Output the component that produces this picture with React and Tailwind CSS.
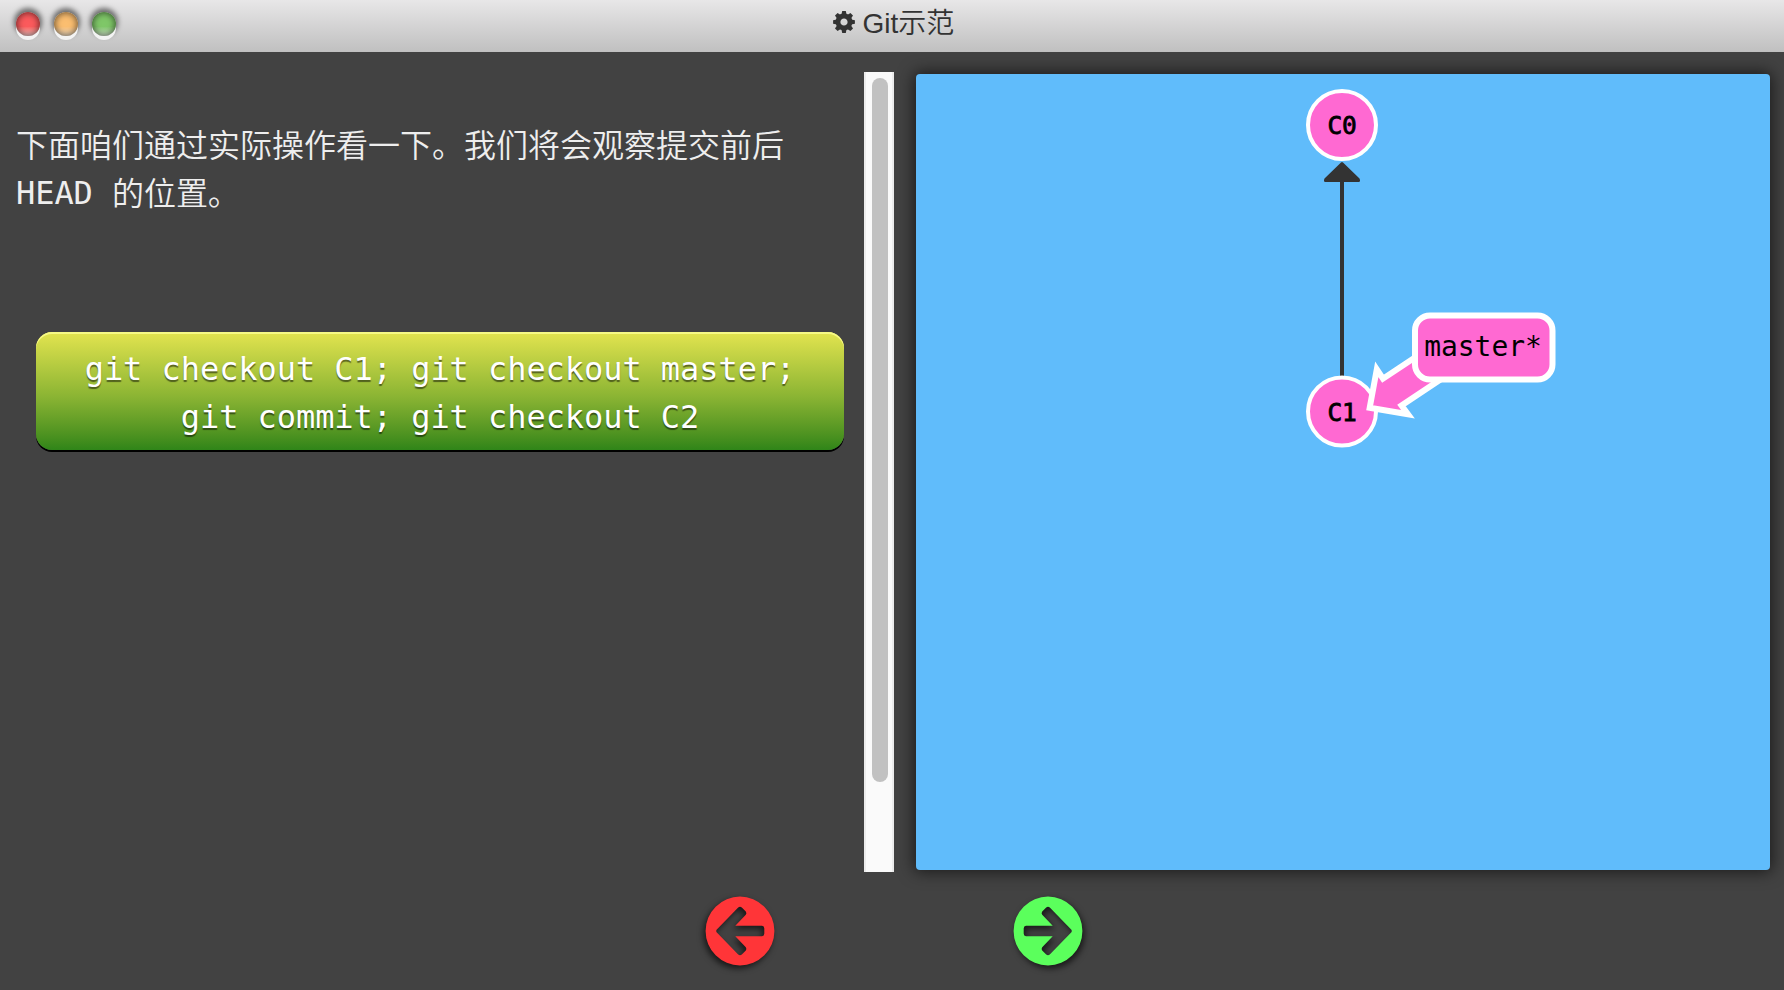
import React from "react";

const MONO = "font-['DejaVu_Sans_Mono','Noto_Sans_CJK_SC',monospace]";

function Light({ className }) {
  return (
    <span
      className={`size-6 rounded-full shadow-[0_4px_0_#f3f3f3,0_-2px_5px_2px_rgba(0,0,0,0.5),inset_0_0_6px_1px_rgba(0,0,0,0.55)] ${className}`}
    />
  );
}

function Gear() {
  return (
    <svg width="22" height="22" viewBox="-11 -11 22 22" fill="#333">
      <circle r="6" fill="none" stroke="#333" strokeWidth="4.8" />
      {[0, 45, 90, 135, 180, 225, 270, 315].map((a) => (
        <path key={a} d="M-2.6-7.2L-1.8-10.9H1.8L2.6-7.2Z" transform={`rotate(${a})`} />
      ))}
    </svg>
  );
}

function TitleBar() {
  return (
    <header className="flex h-[52px] shrink-0 bg-linear-to-b from-[#e8e7e8] to-[#c0c0c0]">
      <div className="flex w-[833px] gap-[14px] pt-3 pl-4">
        <Light className="bg-linear-to-b from-[#fb5a5c] from-60% to-[#f5c4c4]" />
        <Light className="bg-linear-to-b from-[#fbbe70] from-60% to-[#f0dcc0]" />
        <Light className="bg-linear-to-b from-[#7fc768] from-60% to-[#cfe4c8]" />
      </div>
      <div className="flex items-start gap-[7.5px] text-[28px] leading-8 text-[#333]">
        <div className="pt-[10.5px]">
          <Gear />
        </div>
        <h1 className="pt-[8px] font-['Liberation_Sans','Noto_Sans_CJK_SC',sans-serif] font-[350]">Git示范</h1>
      </div>
    </header>
  );
}

function RoundArrow({ color, flip }) {
  return (
    <svg
      width="70"
      height="70"
      viewBox="-35 -35 70 70"
      className={`overflow-visible ${flip ? "-scale-x-100" : ""} drop-shadow-[-2px_3px_3px_rgba(0,0,0,0.65)]`}
    >
      <path
        fill={color}
        fillRule="evenodd"
        d="M0-34.4A34.4 34.4 0 1 1 0 34.4A34.4 34.4 0 1 1 0-34.4ZM-23.4-1.3L-1.8-23.4Q0-25 1.8-23.4L5.8-19.6Q7-18 5.8-16.2L-4.7-5.3H22Q24.3-5 24.3-2.5V2.5Q24.3 5 22 5.3H-4.7L5.8 16.2Q7 18 5.8 19.6L1.8 23.4Q0 25-1.8 23.4L-23.4 1.3Q-24.3 0-23.4-1.3Z"
      />
    </svg>
  );
}

function CommitTree() {
  return (
    <svg width="854" height="796" viewBox="916 74 854 796" className={MONO}>
      <path d="M1342 178V380" stroke="#333" strokeWidth="4" />
      <path d="M1341 162.5Q1342 161.5 1343 162.5L1359.5 178.5Q1361 182 1358.5 182H1325.5Q1323 182 1324.5 178.5Z" fill="#333" />
      <g fill="#ff69d2" stroke="#fff" strokeWidth="4">
        <circle cx="1342" cy="125" r="34" />
        <circle cx="1342" cy="411.5" r="34" />
      </g>
      <g fontSize="24.5" textAnchor="middle" stroke="#000" strokeWidth="0.8" letterSpacing="-0.2">
        <text x="1342" y="134">C0</text>
        <text x="1342" y="421">C1</text>
      </g>
      <g fill="#ff69d2" stroke="#fff" strokeWidth="6">
        <path d="M1450 334.3L1383 378.7L1376.8 369.3L1369.7 407.7L1408 414.3L1401.5 405.5L1460 366.5Z" />
        <rect x="1415" y="315.5" width="137.5" height="64" rx="15" />
      </g>
      <text x="1483" y="356" fontSize="28" textAnchor="middle" letterSpacing="-0.06">master*</text>
    </svg>
  );
}

export default function App() {
  return (
    <div className="flex h-[990px] w-[1784px] flex-col overflow-hidden bg-[#424242]">
      <TitleBar />
      <main className="flex h-[820px] shrink-0 pt-5">
        <section className={`w-[864px] pt-[50px] text-[32px] leading-[48px] tracking-[-0.06px] text-[#eee] ${MONO}`}>
          <p className="pl-4 font-[350]">
            <span className="tracking-normal">下面咱们通过实际操作看一下。我们将会观察提交前后</span>
            <br />
            <span className="align-[1px] leading-none font-normal">HEAD </span>的位置。
          </p>
          <button className="mt-[114px] ml-9 block h-[118px] w-[808px] rounded-2xl bg-linear-to-b from-[#e3e44f] via-[#8ab433] via-55% to-[#2f8519] pt-[3px] text-center text-white shadow-[inset_0_2px_0_#f6f985,0_2px_0_#000] [text-shadow:0_2px_1px_rgba(0,0,0,0.5)]">
            git checkout C1; git checkout master;
            <br />
            git commit; git checkout C2
          </button>
        </section>
        <div className="h-[800px] w-[30px] border-x-2 border-[#ececec] bg-[#fafafa] pt-[6px] pl-[6px]">
          <div className="h-[704px] w-4 rounded-full bg-[#c1c1c1]" />
        </div>
        <section className="mt-[2px] ml-[22px] h-[796px] w-[854px] rounded-[4px] bg-[#60bcfb] shadow-[0_0_16px_2px_rgba(0,0,0,0.6)]">
          <CommitTree />
        </section>
      </main>
      <nav className="flex gap-[238px] pt-6 pl-[704.5px]">
        <button aria-label="Previous">
          <RoundArrow color="#ff3538" />
        </button>
        <button aria-label="Next">
          <RoundArrow color="#5bff5c" flip />
        </button>
      </nav>
    </div>
  );
}
